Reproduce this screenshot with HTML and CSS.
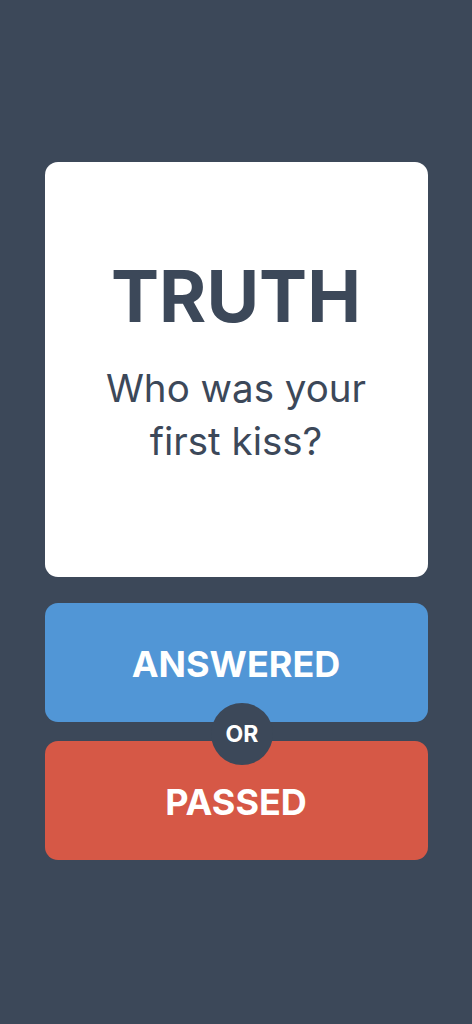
FILE: index.html
```html
<!DOCTYPE html>
<html lang="en">
  <head>
    <meta charset="UTF-8" />
    <meta name="viewport" content="width=device-width, initial-scale=1.0" />
    <title>Truth or Dare</title>
    <link rel="stylesheet" href="styles.css">
  </head>
  <body>
    <div class="game">
      <!-- Current prompt -->
      <div class="card">
        <h1 class="card-type">TRUTH</h1>
        <p class="card-text">Who was your first kiss?</p>
      </div>

      <!-- Result buttons -->
      <div class="choices">
        <button class="choice answered">ANSWERED</button>
        <span class="or">OR</span>
        <button class="choice passed">PASSED</button>
      </div>
    </div>
  </body>
</html>
```

FILE: styles.css
```css
html,
body {
  margin: 0;
  height: 100%;
}
body {
  font-family: Inter, "Noto Sans", sans-serif;
  background: #3c4859;
  color: #3c4859;
  display: flex;
  align-items: center;
  justify-content: center;
  padding-bottom: 3px;
  box-sizing: border-box;
}
.game {
  width: 383px;
  display: flex;
  flex-direction: column;
  gap: 26px;
}
.card {
  height: 415px;
  background: #fff;
  border-radius: 13px;
  display: flex;
  flex-direction: column;
  align-items: center;
  justify-content: center;
  text-align: center;
  padding: 0 40px 10px;
  box-sizing: border-box;
}
.card-type {
  margin: 0;
  font-size: 72px;
  font-weight: 700;
  line-height: 1;
}
.card-text {
  margin: 30px 0 0;
  font-size: 38.5px;
  font-weight: 400;
  line-height: 53px;
}
.choices {
  position: relative;
  display: flex;
  flex-direction: column;
  gap: 19px;
}
.choice {
  height: 119px;
  padding: 4px 0 0;
  border: 0;
  border-radius: 13px;
  color: #fff;
  font-family: inherit;
  font-size: 36px;
  font-weight: 700;
  cursor: pointer;
}
.answered {
  background: #5196d6;
}
.passed {
  background: #d65846;
}
.or {
  position: absolute;
  left: calc(50% + 6px);
  top: 131px;
  width: 62px;
  height: 62px;
  margin: -31px 0 0 -31px;
  border-radius: 50%;
  background: #3c4859;
  color: #fff;
  font-size: 23px;
  font-weight: 700;
  display: flex;
  align-items: center;
  justify-content: center;
}
```
